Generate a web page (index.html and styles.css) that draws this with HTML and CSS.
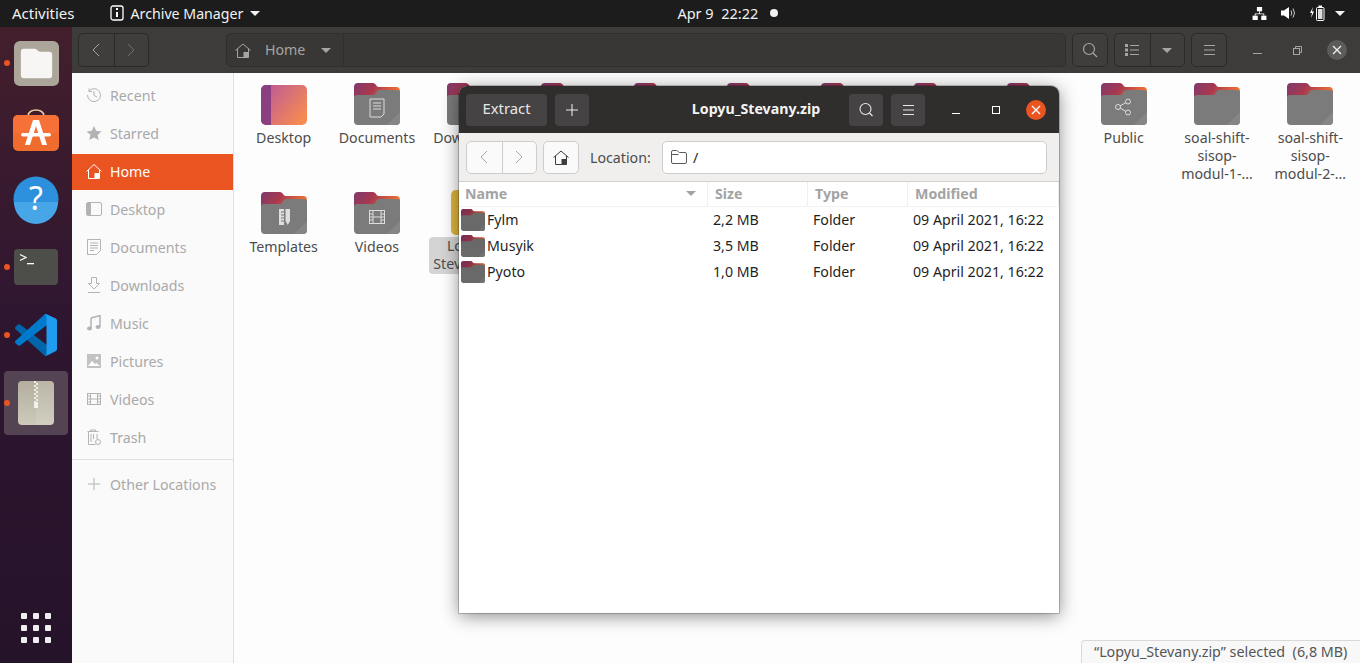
FILE: index.html
```html
<!DOCTYPE html>
<html lang="en">
<head>
    <meta charset="UTF-8">
    <title>Archive Manager</title>
    <link rel="stylesheet" href="styles.css">
</head>
<body>
    <svg class="defs" width="0" height="0">
        <defs>
            <linearGradient id="tabgrad" x1="0" y1="0" x2="1" y2="0.3">
                <stop offset="0" stop-color="#7e3a6e"/>
                <stop offset="0.45" stop-color="#a8384f"/>
                <stop offset="1" stop-color="#ef7234"/>
            </linearGradient>
            <linearGradient id="deskgrad" x1="0" y1="0" x2="1" y2="0.7">
                <stop offset="0" stop-color="#b8559f"/>
                <stop offset="1" stop-color="#f58a52"/>
            </linearGradient>
            <linearGradient id="zipgrad" x1="0" y1="0" x2="0" y2="1">
                <stop offset="0" stop-color="#b3ae9d"/>
                <stop offset="1" stop-color="#cdcaba"/>
            </linearGradient>
            <symbol id="folder" viewBox="0 0 46 42">
                <path d="M0 4a4 4 0 0 1 4-4h15c3 0 3 4 6 4h17a4 4 0 0 1 4 4v10H0z" fill="url(#tabgrad)"/>
                <path d="M0 15a3 3 0 0 1 3-3h16c3 0 3-5 6-5h18a3 3 0 0 1 3 3v28a4 4 0 0 1-4 4H4a4 4 0 0 1-4-4z" fill="#7b7b7b"/>
                <path d="M33 42l13-13v9a4 4 0 0 1-4 4z" fill="#868686"/>
            </symbol>
        </defs>
    </svg>

    <div class="topbar">
        <span class="activities">Activities</span>
        <span class="appmenu">
            <svg class="appicon" width="14" height="16" viewBox="0 0 14 16"><rect x="1" y="1" width="12" height="14" rx="2" fill="none" stroke="#fff" stroke-width="1.3"/><rect x="6" y="3" width="2" height="2" fill="#fff"/><rect x="6" y="7" width="2" height="5" fill="#fff"/></svg>
            Archive Manager
            <i class="caret"></i>
        </span>
        <div class="clock">Apr 9&nbsp;&nbsp;22:22<i class="clock-dot"></i></div>
        <div class="tray">
            <svg width="15" height="13" viewBox="0 0 16 15" fill="#fff"><rect x="5" y="0" width="6" height="5"/><rect x="0" y="10" width="6" height="5"/><rect x="10" y="10" width="6" height="5"/><path d="M7.500 5h1v2.500H13.500V10h-1V8.500h-9V10h-1V7.500h5z"/></svg>
            <svg width="15" height="14" viewBox="0 0 15 14"><path d="M0 4.500h3L8 1v12L3 9.500H0z" fill="#fff"/><path d="M10 4.500q1.500 2.500 0 5M12 2.500q3 4.500 0 9" fill="none" stroke="#ccc" stroke-width="1"/></svg>
            <svg width="15" height="16" viewBox="0 0 15 16"><path d="M3 2L0 8h2l-1 5 3-6.500H2z" fill="#fff"/><rect x="6.500" y="2.500" width="7.500" height="13" rx="1" fill="none" stroke="#fff"/><rect x="8.500" y="0.500" width="3.500" height="2" fill="#fff"/><rect x="8" y="4" width="4.500" height="10" fill="#ddd"/></svg>
            <i class="caret"></i>
        </div>
    </div>

    <div class="desktop">
        <nav class="dock">
            <div class="dock-item running">
                <svg width="45" height="45" viewBox="0 0 46 46"><rect width="46" height="46" rx="6" fill="#aca69a"/><path d="M7 11a3 3 0 0 1 3-3h11c3 0 3 3 6 3h9a3 3 0 0 1 3 3v21a3 3 0 0 1-3 3H10a3 3 0 0 1-3-3z" fill="#f8f6f4"/></svg>
            </div>
            <div class="dock-item">
                <svg width="46" height="46" viewBox="0 -1 46 46"><path d="M15 7c0-8 16-8 16 0" fill="none" stroke="#f2c9a0" stroke-width="1.600"/><rect y="6" width="46" height="36" rx="5" fill="#ef6c2e"/><path d="M0 11a5 5 0 0 1 5-5h36a5 5 0 0 1 5 5v13H0z" fill="#f57138"/><path d="M20 11h6l8 25h-5l-6-19-6 19h-5z" fill="#fff"/><rect x="8" y="24" width="30" height="3.500" rx="1.700" fill="#fff"/></svg>
            </div>
            <div class="dock-item">
                <svg class="help-icon" width="46" height="46" viewBox="0 0 46 46"><circle cx="23" cy="23" r="22.500" fill="#2c90dc"/><path d="M1 26h44a22 22 0 0 1-44 0z" fill="#47a6e8"/><text x="23" y="34" class="help-mark">?</text></svg>
            </div>
            <div class="dock-item running">
                <svg width="46" height="36" viewBox="0 0 46 36"><rect width="44" height="36" x="1" rx="4" fill="#4d4d4a"/><path d="M7 5.500l6 3-6 3" fill="none" stroke="#fff" stroke-width="1.200"/><rect x="14" y="14" width="7" height="1.300" fill="#fff"/></svg>
            </div>
            <div class="dock-item running">
                <svg width="42" height="42" viewBox="0 0 100 100">
                    <path d="M96.500 89.200 75.900 99.100c-2.400 1.200-5.200.7-7.100-1.200L1.300 36.400c-1.800-1.600-1.800-4.500 0-6.100l5.500-5c1.500-1.300 3.700-1.400 5.300-.2l81.300 61.600c2.700 2.100 6.600.1 6.600-3.300v.2c0 2.400-1.400 4.600-3.500 5.600z" fill="#0065a9"/>
                    <path d="M96.500 10.800 75.900.9c-2.400-1.200-5.200-.7-7.100 1.200L1.300 63.600c-1.800 1.600-1.800 4.500 0 6.100l5.500 5c1.500 1.300 3.700 1.400 5.300.2L93.400 13.300c2.700-2.100 6.600-.1 6.600 3.300v-.2c0-2.400-1.400-4.600-3.500-5.600z" fill="#007acc"/>
                    <path d="M75.900 99.100c-2.400 1.200-5.200.7-7.100-1.200 2.300 2.300 6.200.7 6.200-2.600V4.700c0-3.300-3.900-4.900-6.200-2.600 1.900-1.900 4.700-2.400 7.100-1.200l20.600 9.900c2.200 1 3.500 3.200 3.500 5.600v66.200c0 2.400-1.400 4.600-3.500 5.600z" fill="#1f9cf0"/>
                </svg>
            </div>
            <div class="dock-item running active">
                <svg width="36" height="44" viewBox="0 0 36 44"><rect width="36" height="44" rx="4" fill="url(#zipgrad)"/><path d="M18 0h14a4 4 0 0 1 4 4v36a4 4 0 0 1-4 4H18z" fill="#fff" opacity="0.1"/><path d="M17 0v22" stroke="#eeece4" stroke-width="2" stroke-dasharray="2 2"/><path d="M19 2v20" stroke="#eeece4" stroke-width="2" stroke-dasharray="2 2"/><rect x="16" y="21" width="4" height="6" fill="#f3f2ec"/></svg>
            </div>
            <div class="apps-grid">
                <i></i><i></i><i></i><i></i><i></i><i></i><i></i><i></i><i></i>
            </div>
        </nav>

        <main class="files">
            <header class="files-bar">
                <div class="btn-group dark nav-group">
                    <span class="btn-dark"><svg width="8" height="14" viewBox="0 0 8 14"><path d="M7 1L1 7l6 6" fill="none" stroke="#a5a5a2"/></svg></span>
                    <span class="btn-dark"><svg width="8" height="14" viewBox="0 0 8 14"><path d="M1 1l6 6-6 6" fill="none" stroke="#6f6f6c"/></svg></span>
                </div>
                <div class="pathbar">
                    <span class="path-home">
                        <svg width="16" height="15" viewBox="0 0 16 15"><path d="M0.500 7.500L8 1l7.500 6.500M2.500 6v8.500h11V6" fill="none" stroke="#a5a5a2"/><rect x="8.500" y="9" width="5" height="5.500" fill="#a5a5a2"/></svg>
                        <span class="path-label">Home</span>
                        <i class="caret dim"></i>
                    </span>
                </div>
                <div class="btn-group dark">
                    <span class="btn-dark"><svg width="16" height="16" viewBox="0 0 16 16"><circle cx="7" cy="7" r="5.500" fill="none" stroke="#a5a5a2" stroke-width="1.200"/><path d="M11 11l4 4" stroke="#a5a5a2" stroke-width="1.200"/></svg></span>
                </div>
                <div class="btn-group dark nav-group">
                    <span class="btn-dark"><svg width="14" height="12" viewBox="0 0 14 12" fill="#a5a5a2"><path d="M0 0h3v3H0zM0 4.500h3v3H0zM0 9h3v3H0zM5 1h9v1H5zM5 5.500h9v1H5zM5 10h9v1H5z"/></svg></span>
                    <span class="btn-dark"><i class="caret dim"></i></span>
                </div>
                <div class="btn-group dark">
                    <span class="btn-dark"><svg width="11" height="10" viewBox="0 0 11 10" fill="#a5a5a2"><path d="M0 0h11v1H0zM0 4.500h11v1H0zM0 9h11v1H0z"/></svg></span>
                </div>
                <span class="wm-min"></span>
                <svg class="wm-restore" width="9" height="9" viewBox="0 0 9 9" fill="none" stroke="#a5a5a2"><rect x="0.500" y="2.500" width="6" height="6"/><path d="M2.500 2.500v-2h6v6h-2"/></svg>
                <span class="wm-close"><svg width="10" height="10" viewBox="0 0 10 10"><path d="M1 1l8 8M9 1l-8 8" stroke="#f0f0f0" stroke-width="1.300"/></svg></span>
            </header>
            <div class="files-body">
                <aside class="sidebar">
                    <div class="side-row"><svg width="16" height="16" viewBox="0 0 16 16" fill="none" stroke="#b3b3b3"><path d="M1.500 8A6.500 6.500 0 1 0 3 4"/><path d="M3 1.500V4.500h3"/><path d="M8 4v4.500l3 1.500"/></svg>Recent</div>
                    <div class="side-row"><svg width="16" height="16" viewBox="0 0 16 16"><path d="M8 1l2.200 4.800 5.300.6-3.900 3.500 1.100 5.200L8 12.400 3.300 15l1.100-5.200L.5 6.400l5.300-.6z" fill="#b3b3b3"/></svg>Starred</div>
                    <div class="side-row selected"><svg width="16" height="16" viewBox="0 0 16 16"><path d="M0.500 8.500L8 1.500l7.500 7M2.500 7v8.500h11V7" fill="none" stroke="#fff"/><rect x="8.500" y="10" width="5" height="5.500" fill="#fff"/></svg>Home</div>
                    <div class="side-row"><svg width="16" height="14" viewBox="0 0 16 14"><rect x="0.500" y="0.500" width="15" height="13" rx="1.500" fill="none" stroke="#b3b3b3"/><rect x="1" y="1" width="4" height="12" fill="#b3b3b3"/></svg>Desktop</div>
                    <div class="side-row"><svg width="14" height="16" viewBox="0 0 14 16" fill="none" stroke="#b3b3b3"><path d="M.5.500h13v11l-4 4h-9z"/><path d="M3 4h8M3 6.500h8M3 9h8M3 11.500h4"/></svg>Documents</div>
                    <div class="side-row"><svg width="14" height="16" viewBox="0 0 14 16" fill="none" stroke="#b3b3b3"><path d="M4.500.500h5v6h3L7 12 1.500 6.500h3zM1 15.500h12"/></svg>Downloads</div>
                    <div class="side-row"><svg width="14" height="16" viewBox="0 0 14 16"><path d="M4 3l9-2.500V12" fill="none" stroke="#b3b3b3" stroke-width="1.500"/><path d="M4 3v10" stroke="#b3b3b3" stroke-width="1.500"/><ellipse cx="2.500" cy="13.500" rx="2.500" ry="2" fill="#b3b3b3"/><ellipse cx="11" cy="12" rx="2.500" ry="2" fill="#b3b3b3"/></svg>Music</div>
                    <div class="side-row"><svg width="14" height="14" viewBox="0 0 14 14"><rect width="14" height="14" fill="#c2c2c2"/><circle cx="10" cy="4" r="1.500" fill="#fff"/><path d="M1 12l4-5 3 3 1.500-1 3.500 3z" fill="#fff"/></svg>Pictures</div>
                    <div class="side-row"><svg width="14" height="14" viewBox="0 0 14 14" fill="none" stroke="#b3b3b3"><rect x="0.500" y="1.500" width="13" height="11"/><path d="M3.500 1.500v11M10.500 1.500v11M3.500 7h7M.5 4h3M.5 7h3M.5 10h3M10.500 4h3M10.500 7h3M10.500 10h3"/></svg>Videos</div>
                    <div class="side-row"><svg width="15" height="16" viewBox="0 0 15 16" fill="none" stroke="#b3b3b3"><path d="M1 2.500h11M4 2.500V1h5v1.500M2 2.500v13h7M4.500 5v8M7 5v5M10.500 5v5"/><circle cx="11.500" cy="13" r="2.500"/></svg>Trash</div>
                    <div class="side-sep"></div>
                    <div class="side-row"><svg width="12" height="12" viewBox="0 0 12 12"><path d="M6 0v12M0 6h12" stroke="#b3b3b3"/></svg>Other Locations</div>
                </aside>
                <section class="icons">
                    <div class="icon-cell"><svg class="ficon" width="46" height="42" viewBox="0 0 46 42"><rect y="2" width="46" height="40" rx="5" fill="url(#deskgrad)"/><path d="M5 2h5v40H5a5 5 0 0 1-5-5V7a5 5 0 0 1 5-5z" fill="#8a3f80"/></svg><span>Desktop</span></div>
                    <div class="icon-cell"><svg class="ficon" width="46" height="42"><use href="#folder"/><path d="M16 16h14v15l-3 3H16z" fill="none" stroke="#ddd"/><path d="M19 20h8M19 23h8M19 26h8" stroke="#ddd"/></svg><span>Documents</span></div>
                    <div class="icon-cell"><svg class="ficon" width="46" height="42"><use href="#folder"/></svg><span>Downloads</span></div>
                    <div class="icon-cell"><svg class="ficon" width="46" height="42"><use href="#folder"/></svg></div>
                    <div class="icon-cell"><svg class="ficon" width="46" height="42"><use href="#folder"/></svg></div>
                    <div class="icon-cell"><svg class="ficon" width="46" height="42"><use href="#folder"/></svg></div>
                    <div class="icon-cell"><svg class="ficon" width="46" height="42"><use href="#folder"/></svg></div>
                    <div class="icon-cell"><svg class="ficon" width="46" height="42"><use href="#folder"/></svg></div>
                    <div class="icon-cell"><svg class="ficon" width="46" height="42"><use href="#folder"/></svg></div>
                    <div class="icon-cell"><svg class="ficon" width="46" height="42"><use href="#folder"/><g fill="none" stroke="#ddd"><circle cx="17" cy="24" r="2.500"/><circle cx="27" cy="18.500" r="2.500"/><circle cx="27" cy="29.500" r="2.500"/><path d="M19 23l6-3.500M19 25l6 3.500"/></g></svg><span>Public</span></div>
                    <div class="icon-cell"><svg class="ficon" width="46" height="42"><use href="#folder"/></svg><span>soal-shift-sisop-modul-1-…</span></div>
                    <div class="icon-cell"><svg class="ficon" width="46" height="42"><use href="#folder"/></svg><span>soal-shift-sisop-modul-2-…</span></div>

                    <div class="icon-cell"><svg class="ficon" width="46" height="42"><use href="#folder"/><g fill="#ddd"><path d="M18 17h5v16h-5zM24.500 17h4.500v12l-2.200 4-2.300-4z"/></g><path d="M20 20h3M20 23h3M20 26h3M20 29h3" stroke="#7b7b7b"/></svg><span>Templates</span></div>
                    <div class="icon-cell"><svg class="ficon" width="46" height="42"><use href="#folder"/><g fill="none" stroke="#ddd"><rect x="15.500" y="18.500" width="15" height="13"/><path d="M19 18.500v13M27 18.500v13M19 25h8M15.500 22h3.500M15.500 25h3.500M15.500 28h3.500M27 22h3.500M27 25h3.500M27 28h3.500"/></g></svg><span>Videos</span></div>
                    <div class="icon-cell picked"><svg class="ficon zip" width="38" height="45" viewBox="0 0 38 45"><rect width="38" height="45" rx="5" fill="#e0b63f"/></svg><span>Lopyu_<br>Stevany.zip</span></div>
                </section>
            </div>
        </main>

        <div class="status-pill">“Lopyu_Stevany.zip” selected&nbsp;&nbsp;(6,8 MB)</div>

        <div class="archive-win">
            <div class="arch-title">
                <span class="btn-head extract">Extract</span>
                <span class="btn-head square"><svg width="12" height="12" viewBox="0 0 12 12"><path d="M6 0v12M0 6h12" stroke="#e8e8e8" stroke-width="1.100"/></svg></span>
                <div class="arch-name">Lopyu_Stevany.zip</div>
                <span class="btn-head square"><svg width="16" height="16" viewBox="0 0 16 16"><circle cx="7.500" cy="7" r="5.500" fill="none" stroke="#e8e8e8" stroke-width="1.100"/><path d="M11.500 11l3 3" stroke="#e8e8e8" stroke-width="1.200"/></svg></span>
                <span class="btn-head square"><svg width="11" height="10" viewBox="0 0 11 10" fill="#e8e8e8"><path d="M0 0h11v1H0zM0 4.500h11v1H0zM0 9h11v1H0z"/></svg></span>
                <span class="arch-min"></span>
                <span class="arch-max"></span>
                <span class="arch-close"><svg width="10" height="10" viewBox="0 0 10 10"><path d="M1 1l8 8M9 1l-8 8" stroke="#fff" stroke-width="1.400"/></svg></span>
            </div>
            <div class="arch-tools">
                <div class="btn-group light">
                    <span class="btn-light"><svg width="8" height="14" viewBox="0 0 8 14"><path d="M7 1L1 7l6 6" fill="none" stroke="#a8a8a8"/></svg></span>
                    <span class="btn-light"><svg width="8" height="14" viewBox="0 0 8 14"><path d="M1 1l6 6-6 6" fill="none" stroke="#a8a8a8"/></svg></span>
                </div>
                <div class="btn-group light home-btn">
                    <span class="btn-light"><svg width="16" height="15" viewBox="0 0 16 15"><path d="M.5 7.500L8 1l7.500 6.500M2.500 6v8.500h11V6" fill="none" stroke="#3d3d3d"/><rect x="8.500" y="9" width="5" height="5.500" fill="#3d3d3d"/></svg></span>
                </div>
                <span class="loc-label">Location:</span>
                <div class="loc-entry">
                    <svg width="16" height="14" viewBox="0 0 16 14" fill="none" stroke="#5a5a5a"><path d="M.5 2a1.500 1.500 0 0 1 1.500-1.500h3.500c1.500 0 1.500 2 3 2H14a1.500 1.500 0 0 1 1.500 1.500v8a1.500 1.500 0 0 1-1.500 1.500H2A1.500 1.500 0 0 1 .5 12zM.5 4.500h7"/></svg>
                    <span>/</span>
                </div>
            </div>
            <div class="list-head">
                <div class="col-name">Name<i class="caret sort"></i></div>
                <div class="col-size">Size</div>
                <div class="col-type">Type</div>
                <div class="col-mod">Modified</div>
            </div>
            <div class="list-row">
                <div class="col-name"><svg class="row-folder" width="24" height="22"><use href="#folder"/></svg>Fylm</div>
                <div class="col-size">2,2 MB</div>
                <div class="col-type">Folder</div>
                <div class="col-mod">09 April 2021, 16:22</div>
            </div>
            <div class="list-row">
                <div class="col-name"><svg class="row-folder" width="24" height="22"><use href="#folder"/></svg>Musyik</div>
                <div class="col-size">3,5 MB</div>
                <div class="col-type">Folder</div>
                <div class="col-mod">09 April 2021, 16:22</div>
            </div>
            <div class="list-row">
                <div class="col-name"><svg class="row-folder" width="24" height="22"><use href="#folder"/></svg>Pyoto</div>
                <div class="col-size">1,0 MB</div>
                <div class="col-type">Folder</div>
                <div class="col-mod">09 April 2021, 16:22</div>
            </div>
        </div>
    </div>
</body>
</html>
```

FILE: styles.css
```css
* {
    box-sizing: border-box;
}
body {
    margin: 0;
    width: 1360px;
    height: 663px;
    overflow: hidden;
    font-family: 'Noto Sans', sans-serif;
    font-size: 14.2px;
    background-color: #fafafa;
    display: flex;
    flex-direction: column;
}
.defs {
    position: absolute;
}
svg {
    display: block;
    flex: none;
}

/* top panel */
.topbar {
    height: 27px;
    flex: none;
    background-color: #1c1c1c;
    color: #f2f2f2;
    display: flex;
    align-items: center;
    padding: 0 12px 1px;
}
.activities {
    font-size: 15px;
}
.appmenu {
    display: flex;
    align-items: center;
    gap: 7px;
    margin-left: 35px;
}
.caret {
    display: inline-block;
    flex: none;
    width: 0;
    height: 0;
    border-left: 5px solid transparent;
    border-right: 5px solid transparent;
    border-top: 5px solid #f2f2f2;
}
.caret.dim {
    border-top-color: #a5a5a2;
}
.clock {
    display: flex;
    align-items: center;
    margin-left: 417px;
    font-size: 14.5px;
}
.clock-dot {
    width: 8px;
    height: 8px;
    margin-left: 12px;
    border-radius: 50%;
    background-color: #f2f2f2;
}
.tray {
    display: flex;
    align-items: center;
    gap: 14px;
    margin-left: auto;
    padding-right: 3px;
}
.tray .caret {
    margin-left: -4px;
}

/* desktop */
.desktop {
    flex: 1;
    display: flex;
    position: relative;
    min-height: 0;
}
.dock {
    width: 72px;
    flex: none;
    background: linear-gradient(180deg, #431f2c 0%, #2f1630 45%, #25132a 100%);
    display: flex;
    flex-direction: column;
    align-items: center;
    padding-top: 4px;
}
.dock-item {
    width: 64px;
    height: 64px;
    margin-bottom: 4px;
    border-radius: 4px;
    display: flex;
    align-items: center;
    justify-content: center;
    position: relative;
}
.dock-item.running::before {
    content: "";
    position: absolute;
    left: 0;
    top: 29px;
    width: 6px;
    height: 6px;
    border-radius: 50%;
    background-color: #e95420;
}
.dock-item.active {
    background-color: #544352;
}
.help-icon {
    overflow: visible;
}
.help-mark {
    font-family: 'Noto Sans', sans-serif;
    font-size: 32px;
    fill: #fff;
    text-anchor: middle;
}
.apps-grid {
    margin-top: auto;
    margin-bottom: 20px;
    width: 30px;
    display: grid;
    grid-template-columns: repeat(3, 6px);
    justify-content: space-between;
    row-gap: 6px;
}
.apps-grid i {
    width: 6px;
    height: 6px;
    border-radius: 1px;
    background-color: #eee;
}

/* files window */
.files {
    flex: 1;
    min-width: 0;
    display: flex;
    flex-direction: column;
}
.files-bar {
    height: 46px;
    flex: none;
    background-color: #3d3c3a;
    display: flex;
    align-items: center;
    padding-left: 6px;
}
.btn-group {
    display: flex;
    height: 34px;
    border-radius: 5px;
}
.btn-group.dark {
    border: 1px solid #2a2a29;
    background-color: #3f3e3c;
    margin-right: 6px;
}
.btn-dark {
    width: 34px;
    display: flex;
    align-items: center;
    justify-content: center;
}
.nav-group .btn-dark {
    width: 34.5px;
}
.btn-dark + .btn-dark {
    border-left: 1px solid #2a2a29;
}
.nav-group:first-child {
    margin-right: 77px;
}
.pathbar {
    width: 840px;
    height: 34px;
    margin-right: 6px;
    border: 1px solid #2f2f2e;
    border-radius: 5px;
    background-color: #383735;
    display: flex;
}
.path-home {
    width: 117px;
    border-right: 1px solid #2f2f2e;
    display: flex;
    align-items: center;
    padding-left: 8px;
    color: #a5a5a2;
}
.path-label {
    margin: 0 16px 2px 14px;
}
.wm-min {
    width: 9px;
    height: 1px;
    margin: 6px 31px 0 20px;
    background-color: #a5a5a2;
}
.wm-restore {
    margin-right: 25px;
}
.wm-close {
    width: 20px;
    height: 20px;
    border-radius: 50%;
    background-color: #5c5c5b;
    display: flex;
    align-items: center;
    justify-content: center;
}
.files-body {
    flex: 1;
    display: flex;
    min-height: 0;
}
.sidebar {
    width: 162px;
    flex: none;
    background-color: #fafafa;
    border-right: 1px solid #e0e0e0;
    padding-top: 5px;
    color: #a9a9a9;
}
.side-row {
    height: 36px;
    margin-bottom: 2px;
    display: flex;
    align-items: center;
    gap: 8px;
    padding: 0 0 2px 14px;
}
.side-row svg {
    width: 16px;
}
.side-row.selected {
    background-color: #e95420;
    color: #fff;
}
.side-sep {
    height: 1px;
    margin: 3px 0 7px;
    background-color: #e0e0e0;
}
.icons {
    flex: 1;
    min-width: 0;
    background-color: #fdfdfd;
    padding: 10px 3px 0;
    display: grid;
    grid-template-columns: repeat(12, minmax(0, 1fr));
    grid-auto-rows: 109px;
    color: #4c4c4c;
}
.icon-cell {
    display: flex;
    flex-direction: column;
    align-items: center;
    text-align: center;
    line-height: 18px;
    padding: 0 6px;
}
.icon-cell .ficon {
    margin-bottom: 4px;
}
.icon-cell .ficon.zip {
    margin-top: -2px;
    margin-bottom: 2px;
}
.icon-cell.picked span {
    background-color: #d4d4d4;
    border-radius: 4px;
    padding: 0 4px 1px;
    white-space: nowrap;
}
.status-pill {
    position: absolute;
    right: 0;
    bottom: 0;
    width: 279px;
    height: 23px;
    padding: 0 0 2px 12px;
    display: flex;
    align-items: center;
    background-color: #f8f8f8;
    border: 1px solid #d8d8d8;
    border-right: 0;
    border-bottom: 0;
    border-top-left-radius: 4px;
    font-size: 14.3px;
    color: #555;
}

/* archive manager window */
.archive-win {
    position: absolute;
    left: 459px;
    top: 59px;
    width: 600px;
    height: 527px;
    background-color: #fff;
    border-radius: 8px 8px 0 0;
    box-shadow: 0 0 0 1px rgba(0, 0, 0, 0.2), 0 3px 18px rgba(0, 0, 0, 0.45);
    overflow: hidden;
    color: #1f1f1f;
}
.arch-title {
    height: 47px;
    background-color: #302d2d;
    display: flex;
    align-items: center;
    padding: 0 13px 0 7px;
    gap: 8px;
}
.btn-head {
    height: 32px;
    background-color: #454343;
    border-radius: 4px;
    display: flex;
    align-items: center;
    justify-content: center;
    padding-bottom: 3px;
    color: #e8e8e8;
}
.btn-head.square {
    width: 34px;
    padding-bottom: 0;
}
.btn-head.extract {
    width: 81px;
    font-size: 14.8px;
}
.arch-name {
    flex: 1;
    text-align: center;
    color: #f4f4f4;
    font-weight: 700;
    padding: 0 0 2px 74px;
}
.arch-min {
    width: 8px;
    height: 1px;
    margin: 7px 24px 0 19px;
    background-color: #fff;
}
.arch-max {
    width: 8px;
    height: 8px;
    margin-right: 18px;
    border: 1px solid #fff;
}
.arch-close {
    width: 20px;
    height: 20px;
    border-radius: 50%;
    background-color: #e95420;
    display: flex;
    align-items: center;
    justify-content: center;
}
.arch-tools {
    height: 49px;
    background-color: #f0efee;
    border-bottom: 1px solid #cfcfcf;
    display: flex;
    align-items: center;
    padding: 0 12px 0 7px;
}
.btn-group.light {
    height: 33px;
    border: 1px solid #cdcdcd;
    background-color: #fafafa;
}
.btn-light {
    width: 34.5px;
    display: flex;
    align-items: center;
    justify-content: center;
}
.btn-light + .btn-light {
    border-left: 1px solid #cdcdcd;
}
.home-btn {
    margin-left: 6px;
}
.home-btn .btn-light {
    width: 34px;
}
.loc-label {
    margin-left: 11px;
    color: #4c4c4c;
}
.loc-entry {
    width: 385px;
    height: 33px;
    margin-left: auto;
    background-color: #fff;
    border: 1px solid #cdcdcd;
    border-radius: 5px;
    display: flex;
    align-items: center;
    gap: 6px;
    padding-left: 8px;
}
.list-head, .list-row {
    display: grid;
    grid-template-columns: 249px 100px 100px 1fr;
}
.list-head {
    height: 25px;
    align-items: center;
    border-bottom: 1px solid #f2f2f2;
    color: #a3a3a3;
    font-weight: 700;
}
.list-head > div {
    height: 100%;
    display: flex;
    align-items: center;
    padding: 0 0 1px 7px;
    border-right: 1px solid #f0f0f0;
}
.list-head .col-name {
    justify-content: space-between;
    padding: 0 11px 1px 6px;
}
.caret.sort {
    border-top-color: #a3a3a3;
}
.list-row {
    height: 26px;
    align-items: center;
    padding-bottom: 2px;
}
.list-row > div {
    padding-left: 5px;
}
.list-row .col-name {
    display: flex;
    align-items: center;
    padding-left: 2px;
    gap: 2px;
}
.row-folder {
    filter: brightness(0.85);
    margin-top: 2px;
}
```
